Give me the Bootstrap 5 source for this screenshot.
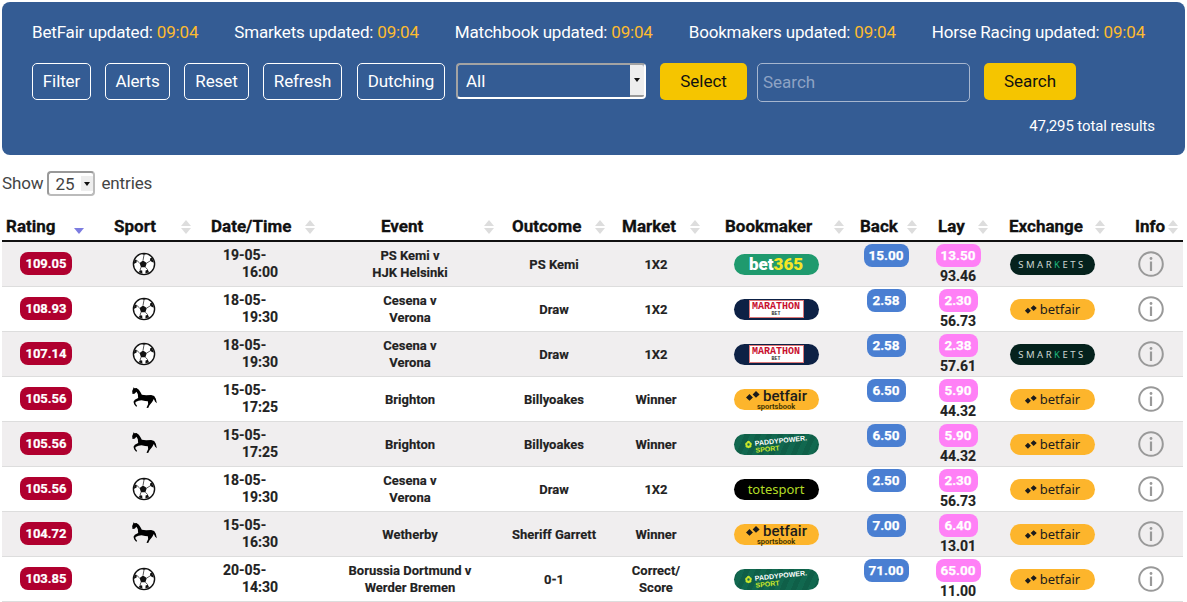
<!DOCTYPE html>
<html lang="en">
<head>
<meta charset="utf-8">
<title>Odds</title>
<link rel="stylesheet" href="https://cdn.jsdelivr.net/npm/bootstrap@5.3.0/dist/css/bootstrap.min.css">
<style>
body{margin:0;background:#fff;font-family:Roboto,"Liberation Sans",sans-serif;color:#444;font-size:17px;overflow-x:hidden}
.top-panel{margin:2px 2px 0;height:153px;background:#345c94;border-radius:8px;padding:20px 30px 0;color:#fff}
.upd-row{gap:36px;line-height:20px;margin-bottom:21px;white-space:nowrap;letter-spacing:-.18px}
.upd-row b{font-weight:400;color:#fdbb2f}
.ctl-row{height:39px}
.ghost-btn{height:37px;padding:0;border:1px solid #fff;color:#fff;background:transparent;border-radius:5px;font-size:17px;line-height:33px;text-align:center;letter-spacing:-.1px}
.w-filter{width:59px;margin-right:14px}.w-alerts{width:65px;margin-right:14px}.w-reset{width:65px;margin-right:14px}.w-refresh{width:79px;margin-right:15px}.w-dutch{width:88px;margin-right:11px}
.sel-wrap{width:190px;height:36px;border:2px solid;border-color:#a3a3a3 #fff #fff #a3a3a3;border-radius:4px;margin-right:14px;overflow:hidden}
.sel-wrap select{flex:1;min-width:0;appearance:none;border:0;background:transparent;color:#fff;font:17px Roboto,sans-serif;padding:0 8px;outline:0}
.sel-caret{width:14px;background:#eee;border-bottom:2px solid #999;display:flex;align-items:center;justify-content:center}
.sel-caret i,.mini-caret i{display:block;border:3.5px solid transparent;border-top:4px solid #111;border-bottom:0}
.gold-btn{height:37px;padding:0;border:0;background:#f5c500;color:#111;border-radius:5px;font-size:17px}
.w-select{width:87px;margin-right:10px}.w-go{width:92px}
.find-box{width:213px;height:39px;margin-right:14px;background:transparent;border:1px solid #a6b6cf;border-radius:5px;color:#fff;font-size:17px;padding:0 5px 2px;outline:0}
.find-box::placeholder{color:#8ea3c4;opacity:1}
.total-line{text-align:right;line-height:20px;margin:14px 0 0;font-size:15px;letter-spacing:-.1px}
.len-row{height:25px;margin:16px 0 0 2px;line-height:25px;color:#444;letter-spacing:-.12px}
.mini-sel{width:48px;height:25px;margin:0 6px 0 4px;border:2px solid;border-color:#999 #bbb #bbb #999;border-radius:4px;overflow:hidden;background:#fff}
.mini-sel select{flex:1;min-width:0;appearance:none;border:0;background:transparent;color:#444;font:17px Roboto,sans-serif;padding:0 0 0 6px;outline:0}
.mini-caret{width:12px;background:#eee;display:flex;align-items:center;justify-content:center;margin:3px 0}
.odds-table{table-layout:fixed;width:1181px;margin:16px 0 0 2px;--bs-table-striped-bg:#f0eeef;--bs-table-striped-color:#222;--bs-table-color:#222;--bs-table-bg:#fff;font-size:13px}
.odds-table>thead>tr>th{padding:2px 0 0;border-bottom:2px solid #111;height:29px;color:#111;font-size:17px;font-weight:700;vertical-align:middle;-webkit-text-stroke:.3px #111}
.odds-table>tbody>tr>td{padding:1px 0 0;height:45px;border-bottom:1px solid #ddd;text-align:center;vertical-align:middle;font-weight:700;line-height:17px;color:#222;-webkit-text-stroke:.15px #222}
.th-in{display:flex;justify-content:space-between;align-items:center;white-space:nowrap}
.sorter{display:flex;flex-direction:column;gap:2px;width:10px;align-items:center}
.sorter i{display:block;border:5px solid transparent;border-top:0;border-bottom:6px solid #ddd}
.sorter i+i{border-bottom:0;border-top:6px solid #ddd}
.sorter.on i{border-bottom-color:transparent}
.sorter.on i+i{border-top-color:#7c7ce0}
th:nth-child(1) .th-in{padding:0 6px 0 4px}
th:nth-child(2) .th-in{padding:0 7px 0 24px}
th:nth-child(3) .th-in{padding:0 1px 0 13px}
th:nth-child(4) .th-in{padding:0 2px 0 65px}
th:nth-child(5) .th-in{padding:0 3px 0 16px}
th:nth-child(6) .th-in{padding:0 4px 0 14px}
th:nth-child(7) .th-in{padding:0 2px 0 21px}
th:nth-child(8) .th-in{padding:0 3px 0 14px}
th:nth-child(9) .th-in{padding:0 8px 0 18px}
th:nth-child(10) .th-in{padding:0 1px 0 13px}
th:nth-child(11) .th-in{padding:0 5px 0 29px}
.odds-table>tbody>tr>td:nth-child(1),.odds-table>tbody>tr>td:nth-child(2){padding-top:0}
.odds-table>tbody>tr>td:nth-child(3){text-align:left;padding-left:25px;font-size:14px}
.odds-table>tbody>tr>td:nth-child(4){padding-left:8px}
.odds-table>tbody>tr>td:nth-child(5){padding-left:4px}
.odds-table>tbody>tr>td:nth-child(7){padding-left:2px}
.odds-table>tbody>tr>td:nth-child(8){vertical-align:top;padding:2px 0 0 6px}
.odds-table>tbody>tr>td:nth-child(9){vertical-align:top;padding-top:2px;font-size:14px}
.odds-table>tbody>tr>td:nth-child(10){padding-left:2px}
.odds-table>tbody>tr>td:nth-child(11){padding:0 0 0 13px}
.time-part{display:block;padding-left:19px}
.rate-pill{display:inline-block;width:52px;height:23px;line-height:23px;background:#b0002f;color:#fff;border-radius:8px;font-size:13px;-webkit-text-stroke:.2px #fff}
.odd-pill{display:block;margin:0 auto 1px;height:23px;line-height:23px;color:#fff;border-radius:8px;font-size:13.5px;-webkit-text-stroke:.25px #fff}
.pb{background:#4a7fd2}.pl{background:#ff80f6}
.p5{width:45px}.p4{width:39px}
.brand{display:inline-flex;align-items:center;justify-content:center;width:85px;height:21px;border-radius:10.5px;vertical-align:middle;overflow:hidden;white-space:nowrap;line-height:1;-webkit-text-stroke:0}
.b365{background:#1f9a6e;color:#fff;font:900 17px Roboto,sans-serif}.b365 em{font-style:normal;color:#f5e625}
.bmar{background:#0d2145}
.bmar span{display:flex;flex-direction:column;align-items:center;justify-content:center;width:55px;height:18px;background:#fff;border:1px solid #d77;color:#c8102e;font:700 10px "Liberation Mono",monospace;line-height:10px}
.bmar span small{font-size:5px;line-height:5px;color:#333}
.bfair{background:#fdb52c;color:#1c1c1c;font:400 13px "Noto Sans",Roboto,sans-serif;gap:2px}
.bfs{background:#fdb52c;color:#1c1c1c;flex-direction:column;font:500 15px Roboto,sans-serif;overflow:visible}
.bfs u{display:flex;align-items:center;gap:2px;text-decoration:none;height:14px;line-height:14px}
.bfs small{font-size:7.5px;line-height:7px;color:#3a3000;font-weight:600}
.bpaddy{background:repeating-linear-gradient(115deg,#0f5f48 0 5px,#11684f 5px 10px);color:#fff;font:700 7px "Liberation Sans",sans-serif;gap:2px}
.bpaddy span{display:flex;flex-direction:column;transform:rotate(-6deg);text-align:left;line-height:7px}
.bpaddy em{font-style:normal;color:#c8e62a}
.btote{background:#000;color:#b3dc26;font:400 13px "Noto Sans",Roboto,sans-serif}
.bsmk{background:#05221d;color:#cfd8d4;font:400 9.5px "Noto Sans",Roboto,sans-serif;letter-spacing:2.5px}
.bsmk em{font-style:normal;color:#1fb57c}
.svg-mid{display:inline-block;vertical-align:middle}
</style>
</head>
<body>
<svg width="0" height="0" class="d-block">
<defs>
<symbol id="ball" viewBox="0 0 24 24">
<circle cx="12" cy="12" r="10.6" fill="#fff" stroke="#111" stroke-width="1.4"/>
<path fill="#111" d="M11 8.4l3.8 2.6-1.4 4.2H9L7.6 11zM9.5 1.7L12 3l2.6-1.3zM20 5.6l-2 1 .2 2.4 3 1.4.4-.4zM2.8 7.4l2 .6-.2 2.4-2.4 1.4-.4-.2zM6.6 20.2l1.4-2 2.2.4.2 2.8-.9-.1zM17.2 20.4l-1.4-2.6-2.2.6-.2 2.8 1-.1z"/>
<path stroke="#111" stroke-width=".7" fill="none" d="M12 3l-1 5.4M14.8 11l3.2-2M7.6 11L4.8 8.4M13.4 15.2l2.4 2.6M9 15.2l-1 3"/>
</symbol>
<symbol id="horse" viewBox="90 20 80 75">
<path fill="#000" d="M97 24l3 3 6-1 7 5 5 8 4 7 13 2 15-1 9 3 5 8 3 14-5-5-4-8-5 9-8 10-4 8-5-1 5-11-1-8-8-1-11-2-9 1-9 4v5l5 7-3 2-6-7-2-8 4-6 10-5-1-11-4-8-6 6-6 1-1-9 3-7z"/>
</symbol>
<symbol id="info" viewBox="0 0 26 26">
<circle cx="13" cy="13" r="11.8" fill="none" stroke="#999" stroke-width="2"/>
<rect x="11.9" y="10.5" width="2.2" height="9.5" fill="#999"/>
<circle cx="13" cy="7.5" r="1.4" fill="#999"/>
</symbol>
<symbol id="dia" viewBox="0 0 16 10">
<path fill="#1c1c1c" d="M4.5 3l3.4 3.4-3.4 3.4L1 6.4zM11 0l3.6 3.4L11 6.8 7.6 3.4z"/>
</symbol>
<symbol id="clov" viewBox="0 0 12 12">
<path fill="#c8e62a" d="M6 1a2.4 2.4 0 012.4 2 2.4 2.4 0 011.4 4 2.4 2.4 0 01-2.6 3.4 2 2 0 01-2.4 0A2.4 2.4 0 012.2 7a2.4 2.4 0 011.4-4A2.4 2.4 0 016 1zm0 3.4A1.6 1.6 0 106 7.6a1.6 1.6 0 000-3.2z"/>
</symbol>
</defs>
</svg>

<div class="top-panel">
  <div class="d-flex upd-row">
    <span>BetFair updated: <b>09:04</b></span>
    <span>Smarkets updated: <b>09:04</b></span>
    <span>Matchbook updated: <b>09:04</b></span>
    <span>Bookmakers updated: <b>09:04</b></span>
    <span>Horse Racing updated: <b>09:04</b></span>
  </div>
  <div class="d-flex align-items-start ctl-row">
    <button type="button" class="btn ghost-btn w-filter">Filter</button>
    <button type="button" class="btn ghost-btn w-alerts">Alerts</button>
    <button type="button" class="btn ghost-btn w-reset">Reset</button>
    <button type="button" class="btn ghost-btn w-refresh">Refresh</button>
    <button type="button" class="btn ghost-btn w-dutch">Dutching</button>
    <div class="d-flex sel-wrap"><select aria-label="Sport"><option>All</option></select><span class="sel-caret"><i></i></span></div>
    <button type="button" class="btn gold-btn w-select">Select</button>
    <input class="find-box" type="text" placeholder="Search">
    <button type="button" class="btn gold-btn w-go">Search</button>
  </div>
  <p class="total-line">47,295 total results</p>
</div>

<div class="d-flex align-items-center len-row">Show<div class="d-flex mini-sel"><select aria-label="Entries"><option>25</option></select><span class="mini-caret"><i></i></span></div>entries</div>

<table class="table table-striped odds-table">
<colgroup><col width="88"><col width="108"><col width="118"><col width="180"><col width="112"><col width="96"><col width="142"><col width="74"><col width="76"><col width="110"><col width="77"></colgroup>
<thead><tr>
<th><div class="th-in">Rating<span class="sorter on"><i></i><i></i></span></div></th>
<th><div class="th-in">Sport<span class="sorter"><i></i><i></i></span></div></th>
<th><div class="th-in">Date/Time<span class="sorter"><i></i><i></i></span></div></th>
<th><div class="th-in">Event<span class="sorter"><i></i><i></i></span></div></th>
<th><div class="th-in">Outcome<span class="sorter"><i></i><i></i></span></div></th>
<th><div class="th-in">Market<span class="sorter"><i></i><i></i></span></div></th>
<th><div class="th-in">Bookmaker<span class="sorter"><i></i><i></i></span></div></th>
<th><div class="th-in">Back<span class="sorter"><i></i><i></i></span></div></th>
<th><div class="th-in">Lay<span class="sorter"><i></i><i></i></span></div></th>
<th><div class="th-in">Exchange<span class="sorter"><i></i><i></i></span></div></th>
<th><div class="th-in">Info<span class="sorter"><i></i><i></i></span></div></th>
</tr></thead>
<tbody>
<tr><td><span class="rate-pill">109.05</span></td><td><svg class="svg-mid" width="24" height="24"><use href="#ball"/></svg></td><td>19-05-<span class="time-part">16:00</span></td><td>PS Kemi v<br>HJK Helsinki</td><td>PS Kemi</td><td>1X2</td>
<td><span class="brand b365">bet<em>365</em></span></td><td><span class="odd-pill pb p5">15.00</span></td><td><span class="odd-pill pl p5">13.50</span>93.46</td>
<td><span class="brand bsmk">SMAR<em>K</em>ETS</span></td><td><svg class="svg-mid" width="26" height="26"><use href="#info"/></svg></td></tr>

<tr><td><span class="rate-pill">108.93</span></td><td><svg class="svg-mid" width="24" height="24"><use href="#ball"/></svg></td><td>18-05-<span class="time-part">19:30</span></td><td>Cesena v<br>Verona</td><td>Draw</td><td>1X2</td>
<td><span class="brand bmar"><span>MARATHON<small>BET</small></span></span></td><td><span class="odd-pill pb p4">2.58</span></td><td><span class="odd-pill pl p4">2.30</span>56.73</td>
<td><span class="brand bfair"><svg width="14" height="9"><use href="#dia"/></svg>betfair</span></td><td><svg class="svg-mid" width="26" height="26"><use href="#info"/></svg></td></tr>

<tr><td><span class="rate-pill">107.14</span></td><td><svg class="svg-mid" width="24" height="24"><use href="#ball"/></svg></td><td>18-05-<span class="time-part">19:30</span></td><td>Cesena v<br>Verona</td><td>Draw</td><td>1X2</td>
<td><span class="brand bmar"><span>MARATHON<small>BET</small></span></span></td><td><span class="odd-pill pb p4">2.58</span></td><td><span class="odd-pill pl p4">2.38</span>57.61</td>
<td><span class="brand bsmk">SMAR<em>K</em>ETS</span></td><td><svg class="svg-mid" width="26" height="26"><use href="#info"/></svg></td></tr>

<tr><td><span class="rate-pill">105.56</span></td><td><svg class="svg-mid" width="27" height="25"><use href="#horse"/></svg></td><td>15-05-<span class="time-part">17:25</span></td><td>Brighton</td><td>Billyoakes</td><td>Winner</td>
<td><span class="brand bfs"><u><svg width="16" height="10"><use href="#dia"/></svg>betfair</u><small>sportsbook</small></span></td><td><span class="odd-pill pb p4">6.50</span></td><td><span class="odd-pill pl p4">5.90</span>44.32</td>
<td><span class="brand bfair"><svg width="14" height="9"><use href="#dia"/></svg>betfair</span></td><td><svg class="svg-mid" width="26" height="26"><use href="#info"/></svg></td></tr>

<tr><td><span class="rate-pill">105.56</span></td><td><svg class="svg-mid" width="27" height="25"><use href="#horse"/></svg></td><td>15-05-<span class="time-part">17:25</span></td><td>Brighton</td><td>Billyoakes</td><td>Winner</td>
<td><span class="brand bpaddy"><svg width="9" height="9"><use href="#clov"/></svg><span>PADDYPOWER.<em>SPORT</em></span></span></td><td><span class="odd-pill pb p4">6.50</span></td><td><span class="odd-pill pl p4">5.90</span>44.32</td>
<td><span class="brand bfair"><svg width="14" height="9"><use href="#dia"/></svg>betfair</span></td><td><svg class="svg-mid" width="26" height="26"><use href="#info"/></svg></td></tr>

<tr><td><span class="rate-pill">105.56</span></td><td><svg class="svg-mid" width="24" height="24"><use href="#ball"/></svg></td><td>18-05-<span class="time-part">19:30</span></td><td>Cesena v<br>Verona</td><td>Draw</td><td>1X2</td>
<td><span class="brand btote">totesport</span></td><td><span class="odd-pill pb p4">2.50</span></td><td><span class="odd-pill pl p4">2.30</span>56.73</td>
<td><span class="brand bfair"><svg width="14" height="9"><use href="#dia"/></svg>betfair</span></td><td><svg class="svg-mid" width="26" height="26"><use href="#info"/></svg></td></tr>

<tr><td><span class="rate-pill">104.72</span></td><td><svg class="svg-mid" width="27" height="25"><use href="#horse"/></svg></td><td>15-05-<span class="time-part">16:30</span></td><td>Wetherby</td><td>Sheriff Garrett</td><td>Winner</td>
<td><span class="brand bfs"><u><svg width="16" height="10"><use href="#dia"/></svg>betfair</u><small>sportsbook</small></span></td><td><span class="odd-pill pb p4">7.00</span></td><td><span class="odd-pill pl p4">6.40</span>13.01</td>
<td><span class="brand bfair"><svg width="14" height="9"><use href="#dia"/></svg>betfair</span></td><td><svg class="svg-mid" width="26" height="26"><use href="#info"/></svg></td></tr>

<tr><td><span class="rate-pill">103.85</span></td><td><svg class="svg-mid" width="24" height="24"><use href="#ball"/></svg></td><td>20-05-<span class="time-part">14:30</span></td><td>Borussia Dortmund v<br>Werder Bremen</td><td>0-1</td><td>Correct/<br>Score</td>
<td><span class="brand bpaddy"><svg width="9" height="9"><use href="#clov"/></svg><span>PADDYPOWER.<em>SPORT</em></span></span></td><td><span class="odd-pill pb p5">71.00</span></td><td><span class="odd-pill pl p5">65.00</span>11.00</td>
<td><span class="brand bfair"><svg width="14" height="9"><use href="#dia"/></svg>betfair</span></td><td><svg class="svg-mid" width="26" height="26"><use href="#info"/></svg></td></tr>
</tbody>
</table>
<script src="https://cdn.jsdelivr.net/npm/bootstrap@5.3.0/dist/js/bootstrap.bundle.min.js"></script>
</body>
</html>
